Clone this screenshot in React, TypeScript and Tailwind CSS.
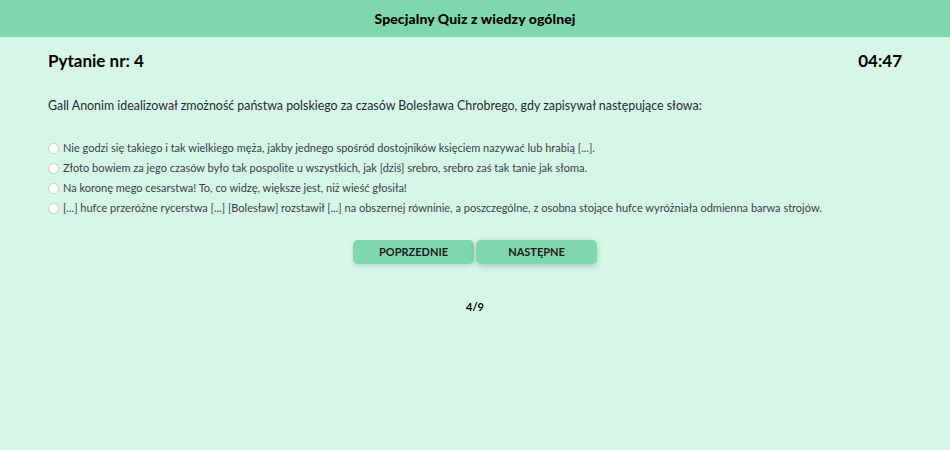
const answers = [
  'Nie godzi się takiego i tak wielkiego męża, jakby jednego spośród dostojników księciem nazywać lub hrabią [...].',
  'Złoto bowiem za jego czasów było tak pospolite u wszystkich, jak [dziś] srebro, srebro zaś tak tanie jak słoma.',
  'Na koronę mego cesarstwa! To, co widzę, większe jest, niż wieść głosiła!',
  '[...] hufce przeróżne rycerstwa [...] [Bolesław] rozstawił [...] na obszernej równinie, a poszczególne, z osobna stojące hufce wyróżniała odmienna barwa strojów.',
]

export default function App() {
  return (
    <div className="min-h-[450px] bg-[#d6f7e5] font-['Lato',sans-serif] text-black">
      {/* nagłówek */}
      <header className="flex h-[37px] items-center justify-center bg-[#7fd8ad]">
        <h1 className="text-[14px] font-black tracking-[0.1px]">Specjalny Quiz z wiedzy ogólnej</h1>
      </header>

      <main className="px-[48px]">
        <div className="mt-[11px] flex items-center justify-between">
          <h2 className="text-[17px] font-bold">Pytanie nr: 4</h2>
          <span className="text-[17px] font-bold">04:47</span>
        </div>

        <p className="mt-[23px] text-[12.4px] text-[#1f2a33]">
          Gall Anonim idealizował zmożność państwa polskiego za czasów Bolesława Chrobrego, gdy zapisywał następujące słowa:
        </p>

        <ul className="mt-[26px] flex flex-col gap-[6px]">
          {answers.map((a) => (
            <li key={a} className="flex h-[14px] items-center gap-[4px] text-[11px] text-[#36414b]">
              <span className="size-[11px] shrink-0 rounded-full border border-[#c9cdd1] bg-white" />
              <span>{a}</span>
            </li>
          ))}
        </ul>

        <div className="mt-[25px] flex justify-center gap-[2px]">
          <button className="h-[24px] w-[121px] rounded-[5px] bg-[#7fd8ad] text-[11px] font-bold text-[#1a1a1a] shadow-[0_2px_4px_rgba(0,0,0,0.12)]">
            POPRZEDNIE
          </button>
          <button className="h-[24px] w-[121px] rounded-[5px] bg-[#7fd8ad] text-[11px] font-bold text-[#1a1a1a] shadow-[0_2px_6px_rgba(0,0,0,0.2)]">
            NASTĘPNE
          </button>
        </div>

        <p className="mt-[35px] text-center text-[11px] font-bold">4/9</p>
      </main>
    </div>
  )
}
